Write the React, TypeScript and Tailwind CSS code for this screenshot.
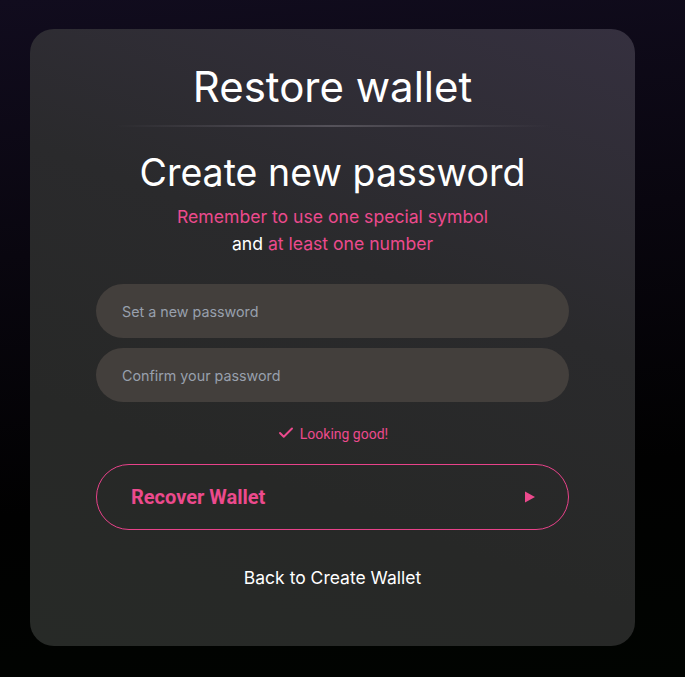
import { Check } from "lucide-react";

export default function App() {
  return (
    <div className="min-h-[677px] w-full bg-[linear-gradient(175deg,#110c1e_0%,#09060f_35%,#010101_70%,#010401_100%)] pt-[29px] pl-[30px] font-['Inter',sans-serif]">
      <div className="flex h-[617px] w-[605px] flex-col items-center rounded-[24px] bg-[linear-gradient(200deg,#35303f_0%,#2a2a2c_40%,#272827_70%,#272a27_100%)] px-[66px] pt-[30px]">
        <h1 className="text-[42px] font-normal leading-[56px] text-white">Restore wallet</h1>
        <div className="mt-[10px] h-[2px] w-[436px] bg-[linear-gradient(90deg,transparent,#55525a_50%,transparent)]" />
        <h2 className="mt-[24px] text-[37.5px] font-normal leading-[44px] text-white">Create new password</h2>
        <p className="mt-[8px] text-center text-[17.6px] leading-[27px] text-[#ec4a8d]">
          Remember to use one special symbol
          <br />
          <span className="text-white">and</span> at least one number
        </p>
        <div className="mt-[27px] flex w-full flex-col gap-[10px]">
          <input
            placeholder="Set a new password"
            className="h-[54px] w-full rounded-full bg-[#433f3c] px-[26px] text-[14.3px] text-white outline-none placeholder:text-[#98a0ad]"
          />
          <input
            placeholder="Confirm your password"
            className="h-[54px] w-full rounded-full bg-[#433f3c] px-[26px] text-[14.3px] text-white outline-none placeholder:text-[#98a0ad]"
          />
        </div>
        <div className="mt-[22px] flex items-center gap-[5px] font-['Roboto',sans-serif] text-[14px] text-[#ec4a8d]">
          <Check size={18} strokeWidth={2.6} className="-mt-[3px]" />
          <span>Looking good!</span>
        </div>
        <button className="mt-[19px] flex h-[66px] w-full items-center justify-between rounded-full border border-[#e8428a] pl-[34px] pr-[32px] font-['Roboto',sans-serif] text-[20px] font-bold text-[#ec4a8d]">
          <span>Recover Wallet</span>
          <svg width="12" height="12" viewBox="0 0 12 12">
            <path d="M1 0.5 L11 6 L1 11.5 Z" fill="#ec4a8d" />
          </svg>
        </button>
        <a className="mt-[35px] text-[17.5px] text-white">Back to Create Wallet</a>
      </div>
    </div>
  );
}
